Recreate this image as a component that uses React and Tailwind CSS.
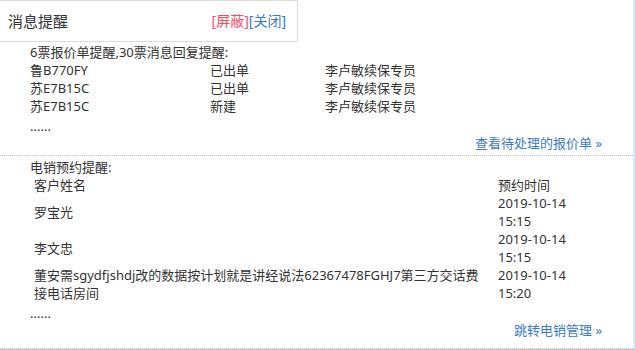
export default function App() {
  const quotes = [
    ['鲁B770FY', '已出单', '李卢敏续保专员'],
    ['苏E7B15C', '已出单', '李卢敏续保专员'],
    ['苏E7B15C', '新建', '李卢敏续保专员'],
  ]

  const calls = [
    { name: '罗宝光', date: '2019-10-14', time: '15:15' },
    { name: '李文忠', date: '2019-10-14', time: '15:15' },
    {
      name: '董安需sgydfjshdj改的数据按计划就是讲经说法62367478FGHJ7第三方交话费接电话房间',
      date: '2019-10-14',
      time: '15:20',
    },
  ]

  return (
    <div
      className="w-[635px] h-[350px] bg-white overflow-hidden text-[13px] leading-[18px] text-[#333]"
      style={{ fontFamily: '"Noto Sans", "Noto Sans CJK SC", sans-serif' }}
    >
      <div className="h-[349px] border-r-2 border-[#dfe8f5] flex flex-col">
        {/* header */}
        <div className="w-[298px] h-[42px] border-t border-r border-b border-[#dcdcdc] flex items-center justify-between pl-[8px] pr-[11px]">
          <span className="text-[15px]">消息提醒</span>
          <span className="text-[14px]">
            <a className="text-[#f2506a] cursor-pointer">[屏蔽]</a>
            <a className="text-[#3a7bc8] cursor-pointer">[关闭]</a>
          </span>
        </div>

        {/* quote reminders */}
        <div className="pl-[30px] pr-[31px] pt-[1px]">
          <div>6票报价单提醒,30票消息回复提醒:</div>
          {quotes.map((q, i) => (
            <div key={i} className="flex">
              <span className="w-[180px]">{q[0]}</span>
              <span className="w-[115px]">{q[1]}</span>
              <span>{q[2]}</span>
            </div>
          ))}
          <div className="leading-[14px] pt-[4px]">......</div>
          <div className="text-right text-[#3a7bc8] h-[22px] pt-[1px]">
            <a className="cursor-pointer">查看待处理的报价单 »</a>
          </div>
        </div>

        <div className="border-b border-dotted border-[#c4c4c4]" />

        {/* phone reminders */}
        <div className="pl-[30px] pr-[31px] pt-[2px]">
          <div>电销预约提醒:</div>
          <table className="w-full border-collapse">
            <thead>
              <tr>
                <th className="font-normal text-left pl-[4px] w-[464px]">客户姓名</th>
                <th className="font-normal text-left pl-[4px]">预约时间</th>
              </tr>
            </thead>
            <tbody>
              {calls.map((c, i) => (
                <tr key={i}>
                  <td className="pl-[4px] pr-[8px] align-middle">{c.name}</td>
                  <td className="pl-[4px] align-middle">
                    {c.date}
                    <br />
                    {c.time}
                  </td>
                </tr>
              ))}
            </tbody>
          </table>
          <div className="leading-[14px] pt-[4px]">......</div>
          <div className="text-right text-[#3a7bc8] pt-[1px]">
            <a className="cursor-pointer">跳转电销管理 »</a>
          </div>
        </div>

        <div className="mt-auto border-b border-dotted border-[#c4c4c4]" />
      </div>
      <div className="h-[1px] bg-[#b8c2d0]" />
    </div>
  )
}
